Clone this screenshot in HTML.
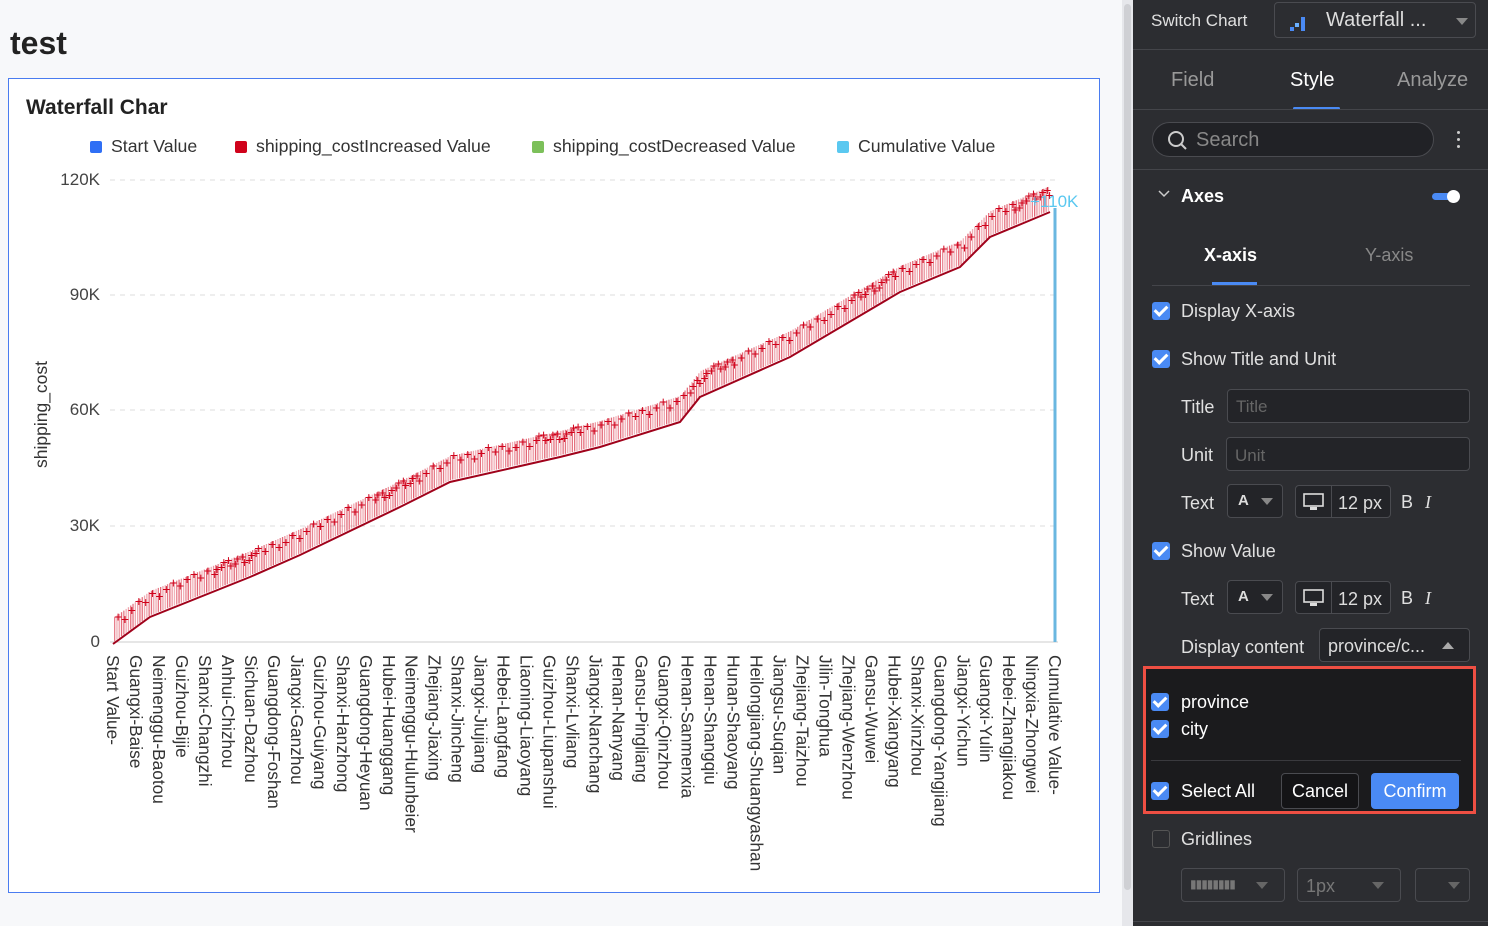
<!DOCTYPE html>
<html><head><meta charset="utf-8">
<style>
*{box-sizing:border-box;margin:0;padding:0}
body{width:1488px;height:926px;overflow:hidden;background:#f4f5f7;font-family:"Liberation Sans",Arial,sans-serif;position:relative}
.abs{position:absolute}
#left{position:absolute;left:0;top:0;width:1122px;height:926px;background:#f7f8fa}
#title{left:10px;top:25px;font-size:32px;font-weight:bold;color:#222}
#card{left:8px;top:78px;width:1092px;height:815px;background:#fff;border:1px solid #4a7cf0}
.lg{font-size:17.7px;color:#333;top:136px}
.sq{width:12px;height:12px;border-radius:2px;top:141px}
.yl{font-size:17px;color:#444;text-align:right;width:60px;left:40px}
.xl{position:absolute;top:655px;writing-mode:vertical-rl;font-size:17.3px;color:#333;white-space:nowrap;line-height:18px}
#scroll{left:1122px;top:0;width:11px;height:926px;background:#e6e7eb}
#scroll div{position:absolute;left:2px;top:4px;width:7px;height:886px;background:#cfd0d4;border-radius:4px}
#panel{left:1133px;top:0;width:355px;height:926px;background:#2c2d31;color:#ddd}
.pt{font-size:18px;color:#e0e0e0}
.box{border:1px solid #4a4b50;border-radius:4px;background:#232428}
.cb{width:18px;height:18px;border-radius:3px;background:#4a8af4}
.cb::after{content:"";position:absolute;left:5px;top:1px;width:5px;height:10px;border:solid #fff;border-width:0 3px 3px 0;transform:rotate(45deg)}
.tri{width:0;height:0;border-left:6px solid transparent;border-right:6px solid transparent;border-top:7px solid #888}
</style></head><body>
<div id="left"></div>
<div class="abs" id="title">test</div>
<div class="abs" id="card"></div>
<div class="abs" style="left:26px;top:96px;font-size:21px;font-weight:bold;color:#222">Waterfall Char</div>
<div class="abs sq" style="left:90px;background:#2f6ff5"></div><div class="abs lg" style="left:111px">Start Value</div>
<div class="abs sq" style="left:235px;background:#d0021b"></div><div class="abs lg" style="left:256px">shipping_costIncreased Value</div>
<div class="abs sq" style="left:532px;background:#7cc05a"></div><div class="abs lg" style="left:553px">shipping_costDecreased Value</div>
<div class="abs sq" style="left:837px;background:#5ac8f0"></div><div class="abs lg" style="left:858px">Cumulative Value</div>
<div class="abs yl" style="top:170px">120K</div>
<div class="abs yl" style="top:285px">90K</div>
<div class="abs yl" style="top:400px">60K</div>
<div class="abs yl" style="top:516px">30K</div>
<div class="abs yl" style="top:632px">0</div>
<div class="abs" style="left:31px;top:468px;transform:rotate(-90deg);transform-origin:0 0;font-size:17.5px;color:#333">shipping_cost</div>
<svg class="abs" style="left:0;top:0" width="1120" height="926">
<g stroke="#ddd" stroke-dasharray="5 5" stroke-width="1">
<line x1="110" y1="180" x2="1058" y2="180"/><line x1="110" y1="295" x2="1058" y2="295"/>
<line x1="110" y1="410" x2="1058" y2="410"/><line x1="110" y1="526" x2="1058" y2="526"/>
</g>
<line x1="110" y1="642" x2="1058" y2="642" stroke="#ccc"/>
<g id="wf"></g>
<line x1="1055" y1="208" x2="1055" y2="642" stroke="#6ab7e0" stroke-width="3"/>
<text x="1030" y="207" font-size="17" fill="#5ac8f0" font-family="Liberation Sans">+110K</text>
</svg>
<div id="xls"></div>
<div class="abs" id="scroll"><div></div></div>
<div class="abs" id="panel">
 <div class="abs pt" style="left:18px;top:11px;font-size:17px">Switch Chart</div>
 <div class="abs box" style="left:141px;top:2px;width:202px;height:36px;background:#2c2d31">
  <svg class="abs" style="left:14px;top:12px" width="20" height="18"><rect x="1" y="12" width="4" height="4" fill="#4a8af4"/><rect x="6" y="8" width="4" height="4" fill="#6ab0ff"/><rect x="12" y="2" width="4" height="14" fill="#4a8af4"/></svg>
  <div class="abs" style="left:51px;top:6px;font-size:20px;color:#ddd">Waterfall ...</div>
  <div class="abs tri" style="left:181px;top:15px"></div>
 </div>
 <div class="abs" style="left:0;top:49px;width:355px;height:1px;background:#44454a"></div>
 <div class="abs" style="left:38px;top:69px;font-size:20px;color:#999">Field</div>
 <div class="abs" style="left:157px;top:69px;font-size:20px;color:#fff">Style</div>
 <div class="abs" style="left:264px;top:69px;font-size:20px;color:#999">Analyze</div>
 <div class="abs" style="left:160px;top:107px;width:47px;height:3px;background:#4a8af4;border-radius:2px"></div>
 <div class="abs" style="left:0;top:109px;width:355px;height:1px;background:#44454a"></div>
 <div class="abs" style="left:19px;top:122px;width:282px;height:35px;border:1px solid #4a4b50;border-radius:18px;background:#212226"></div>
 <svg class="abs" style="left:34px;top:130px" width="22" height="22"><circle cx="9" cy="9" r="7" stroke="#ccc" stroke-width="2" fill="none"/><line x1="14" y1="14" x2="19" y2="19" stroke="#ccc" stroke-width="2"/></svg>
 <div class="abs" style="left:63px;top:129px;font-size:20px;color:#888">Search</div>
 <div class="abs" style="left:324px;top:131px;width:3px;height:3px;background:#ccc;border-radius:2px;box-shadow:0 7px 0 #ccc,0 14px 0 #ccc"></div>
 <div class="abs" style="left:0;top:169px;width:355px;height:1px;background:#44454a"></div>
 <svg class="abs" style="left:25px;top:189px" width="12" height="10"><path d="M1 2 L6 7 L11 2" stroke="#ccc" fill="none" stroke-width="1.5"/></svg>
 <div class="abs" style="left:48px;top:186px;font-size:18px;font-weight:bold;color:#fff">Axes</div>
 <div class="abs" style="left:299px;top:193px;width:26px;height:7px;background:#4a8af4;border-radius:4px"></div>
 <div class="abs" style="left:314px;top:190px;width:13px;height:13px;background:#fff;border-radius:50%"></div>
 <div class="abs" style="left:71px;top:245px;font-size:18px;font-weight:bold;color:#fff">X-axis</div>
 <div class="abs" style="left:232px;top:245px;font-size:18px;color:#888">Y-axis</div>
 <div class="abs" style="left:79px;top:282px;width:45px;height:3px;background:#4a8af4"></div>
 <div class="abs" style="left:19px;top:285px;width:318px;height:1px;background:#44454a"></div>
 <div class="abs cb" style="left:19px;top:302px"></div><div class="abs pt" style="left:48px;top:301px">Display X-axis</div>
 <div class="abs cb" style="left:19px;top:350px"></div><div class="abs pt" style="left:48px;top:349px">Show Title and Unit</div>
 <div class="abs pt" style="left:48px;top:397px">Title</div>
 <div class="abs box" style="left:94px;top:389px;width:243px;height:34px"><span class="abs" style="left:8px;top:7px;font-size:17px;color:#666">Title</span></div>
 <div class="abs pt" style="left:48px;top:445px">Unit</div>
 <div class="abs box" style="left:93px;top:437px;width:244px;height:34px"><span class="abs" style="left:8px;top:8px;font-size:17px;color:#666">Unit</span></div>
 <div class="abs pt" style="left:48px;top:493px">Text</div>
 <div class="abs box" style="left:94px;top:484px;width:56px;height:34px"><span class="abs" style="left:10px;top:7px;font-size:15px;font-weight:bold;color:#ddd">A</span><div class="abs tri" style="left:33px;top:13px"></div></div>
 <div class="abs box" style="left:162px;top:485px;width:96px;height:33px"><svg class="abs" style="left:7px;top:7px" width="22" height="18"><rect x="1" y="1" width="19" height="12" stroke="#ddd" fill="none" stroke-width="1.6"/><rect x="7" y="14" width="7" height="3" fill="#ddd"/></svg><div class="abs" style="left:35px;top:0;width:1px;height:31px;background:#4a4b50"></div><span class="abs" style="left:42px;top:7px;font-size:18px;color:#ddd">12 px</span></div>
 <div class="abs pt" style="left:268px;top:492px">B</div><div class="abs pt" style="left:292px;top:492px;font-style:italic;font-family:'Liberation Serif'">I</div>
 <div class="abs cb" style="left:19px;top:542px"></div><div class="abs pt" style="left:48px;top:541px">Show Value</div>
 <div class="abs pt" style="left:48px;top:589px">Text</div>
 <div class="abs box" style="left:94px;top:580px;width:56px;height:34px"><span class="abs" style="left:10px;top:7px;font-size:15px;font-weight:bold;color:#ddd">A</span><div class="abs tri" style="left:33px;top:13px"></div></div>
 <div class="abs box" style="left:162px;top:581px;width:96px;height:33px"><svg class="abs" style="left:7px;top:7px" width="22" height="18"><rect x="1" y="1" width="19" height="12" stroke="#ddd" fill="none" stroke-width="1.6"/><rect x="7" y="14" width="7" height="3" fill="#ddd"/></svg><div class="abs" style="left:35px;top:0;width:1px;height:31px;background:#4a4b50"></div><span class="abs" style="left:42px;top:7px;font-size:18px;color:#ddd">12 px</span></div>
 <div class="abs pt" style="left:268px;top:588px">B</div><div class="abs pt" style="left:292px;top:588px;font-style:italic;font-family:'Liberation Serif'">I</div>
 <div class="abs pt" style="left:48px;top:637px">Display content</div>
 <div class="abs box" style="left:186px;top:628px;width:151px;height:34px"><span class="abs" style="left:8px;top:7px;font-size:18px;color:#ddd">province/c...</span><div class="abs" style="left:122px;top:13px;border-left:6px solid transparent;border-right:6px solid transparent;border-bottom:7px solid #aaa"></div></div>
 <div class="abs" style="left:10px;top:666px;width:333px;height:148px;background:#1b1b1d;border:3px solid #ee4f43"></div>
 <div class="abs cb" style="left:18px;top:693px"></div><div class="abs" style="left:48px;top:692px;font-size:18px;color:#fff">province</div>
 <div class="abs cb" style="left:18px;top:720px"></div><div class="abs" style="left:48px;top:719px;font-size:18px;color:#fff">city</div>
 <div class="abs" style="left:18px;top:760px;width:310px;height:1px;background:#3a3a3e"></div>
 <div class="abs cb" style="left:18px;top:782px"></div><div class="abs" style="left:48px;top:781px;font-size:18px;color:#fff">Select All</div>
 <div class="abs" style="left:148px;top:773px;width:78px;height:36px;border:1px solid #4a4b50;border-radius:4px;background:#141416;color:#fff;font-size:18px;text-align:center;line-height:34px">Cancel</div>
 <div class="abs" style="left:238px;top:773px;width:88px;height:36px;border-radius:4px;background:#4a8af4;color:#fff;font-size:18px;text-align:center;line-height:36px">Confirm</div>
 <div class="abs" style="left:19px;top:830px;width:18px;height:18px;border:1px solid #555;border-radius:3px"></div>
 <div class="abs pt" style="left:48px;top:829px">Gridlines</div>
 <div class="abs box" style="left:48px;top:868px;width:104px;height:34px;background:#2c2d31"><span class="abs" style="left:8px;top:8px;font-size:12px;color:#777;letter-spacing:-1px">▮▮▮▮▮▮▮▮</span><div class="abs tri" style="left:74px;top:13px;border-top-color:#666"></div></div>
 <div class="abs box" style="left:164px;top:868px;width:104px;height:34px;background:#2c2d31"><span class="abs" style="left:8px;top:7px;font-size:18px;color:#777">1px</span><div class="abs tri" style="left:74px;top:13px;border-top-color:#666"></div></div>
 <div class="abs box" style="left:282px;top:868px;width:55px;height:34px;background:#2c2d31"><div class="abs tri" style="left:32px;top:13px;border-top-color:#666"></div></div>
 <div class="abs" style="left:0;top:921px;width:355px;height:1px;background:#44454a"></div>
</div>
<script>
var L="Start Value-,Guangxi-Baise,Neimenggu-Baotou,Guizhou-Bijie,Shanxi-Changzhi,Anhui-Chizhou,Sichuan-Dazhou,Guangdong-Foshan,Jiangxi-Ganzhou,Guizhou-Guiyang,Shanxi-Hanzhong,Guangdong-Heyuan,Hubei-Huanggang,Neimenggu-Hulunbeier,Zhejiang-Jiaxing,Shanxi-Jincheng,Jiangxi-Jiujiang,Hebei-Langfang,Liaoning-Liaoyang,Guizhou-Liupanshui,Shanxi-Lvliang,Jiangxi-Nanchang,Henan-Nanyang,Gansu-Pingliang,Guangxi-Qinzhou,Henan-Sanmenxia,Henan-Shangqiu,Hunan-Shaoyang,Heilongjiang-Shuangyashan,Jiangsu-Suqian,Zhejiang-Taizhou,Jilin-Tonghua,Zhejiang-Wenzhou,Gansu-Wuwei,Hubei-Xiangyang,Shanxi-Xinzhou,Guangdong-Yangjiang,Jiangxi-Yichun,Guangxi-Yulin,Hebei-Zhangjiakou,Ningxia-Zhongwei,Cumulative Value-".split(",");
var h="";for(var i=0;i<L.length;i++){h+='<div class="xl" style="left:'+(104+i*22.98)+'px">'+L[i]+'</div>';}
document.getElementById("xls").innerHTML=h;
var P=[[113,642],[150,615],[250,575],[300,553],[400,505],[450,480],[560,455],[600,445],[680,420],[700,395],[790,355],[900,290],[960,265],[990,235],[1050,210]];
function yAt(x){for(var k=0;k<P.length-1;k++){if(x<=P[k+1][0]){var t=(x-P[k][0])/(P[k+1][0]-P[k][0]);return P[k][1]+t*(P[k+1][1]-P[k][1]);}}return 210;}
var s="";for(var x=114;x<1050;x+=2.3){var y=yAt(x);s+='<rect x="'+x.toFixed(1)+'" y="'+(y-24).toFixed(1)+'" width="1.3" height="24" fill="#d0021b" opacity="'+(0.3+0.3*Math.sin(x*1.7)*Math.sin(x*1.7))+'"/>';
if(Math.floor(x)%7<3)s+='<text x="'+x.toFixed(1)+'" y="'+(y-12-(Math.floor(x)%5)*2).toFixed(1)+'" font-size="14" fill="#d0021b" font-family="Liberation Sans">+</text>';}
s+='<polyline fill="none" stroke="#a0021b" stroke-width="2" points="'+P.map(function(p){return p[0]+','+(p[1]+2)}).join(' ')+'"/>';
document.getElementById("wf").innerHTML=s;
</script>
</body></html>
